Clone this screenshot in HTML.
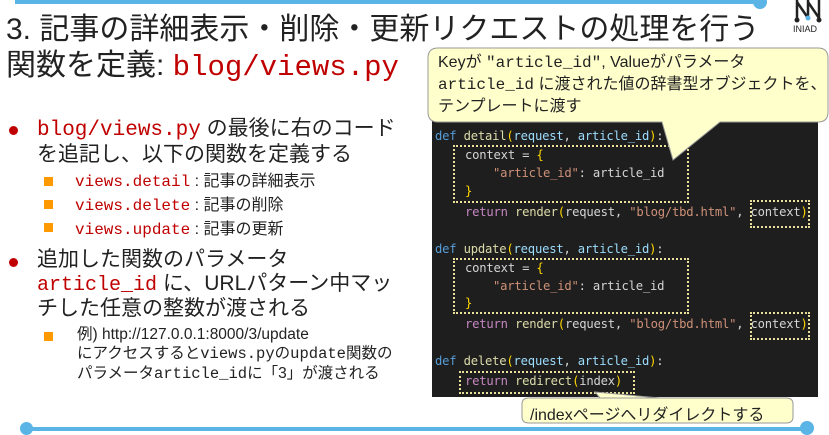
<!DOCTYPE html><html><head><meta charset="utf-8"><style>
body{margin:0;width:829px;height:435px;background:#fff;position:relative;overflow:hidden;font-family:"Liberation Sans","Noto Sans CJK JP",sans-serif;color:#222}
.a{position:absolute;white-space:nowrap}
.m{font-family:"Liberation Mono","DejaVu Sans Mono",monospace}
.r{color:#c00000}
.code{position:absolute;left:432px;top:121px;width:386px;height:276px;background:#1e1e1e}
.c{position:absolute;font-family:"DejaVu Sans Mono","Liberation Mono",monospace;font-size:12.2px;color:#d4d4d4;white-space:pre;letter-spacing:-0.2px}
.k{color:#569cd6}.f{color:#dcdcaa}.p{color:#9cdcfe}.s{color:#ce9178}.q{color:#c586c0}.b{color:#ffd700}
.d{position:absolute;border:2px dotted #e8e09a}
.sq{position:absolute;width:9px;height:9px;background:#f90}
.dot{position:absolute;width:9px;height:9px;border-radius:50%;background:#c00000}
</style></head><body>
<div class="a" style="left:15px;top:0;width:745px;height:4px;background:#5ab4e6"></div>
<div class="a" style="left:753px;top:-5px;width:14px;height:14px;border-radius:50%;background:#5ab4e6"></div>
<div class="a" style="left:25px;top:427px;width:785px;height:4px;background:#5ab4e6"></div>
<div class="a" style="left:20px;top:422px;width:13px;height:13px;border-radius:50%;background:#5ab4e6"></div>
<div class="a" style="left:800px;top:421px;width:14px;height:14px;border-radius:50%;background:#5ab4e6"></div>
<svg class="a" style="left:790px;top:0" width="39" height="34"><path d="M7 0V20M7 2L18 18M18 0V20M18 2L29 18M29 0V20" stroke="#222" stroke-width="2.5" fill="none"/><circle cx="7" cy="20" r="2.5" fill="#222"/><circle cx="18" cy="18" r="2.5" fill="#5ab4e6"/><circle cx="29" cy="20" r="2.5" fill="#222"/><text x="3" y="32" font-size="9" fill="#222" font-family="Liberation Sans">INIAD</text></svg>
<div class="a" style="left:6px;top:4px;font-size:30px;letter-spacing:0">3. 記事の詳細表示・削除・更新リクエストの処理を行う</div>
<div class="a" style="left:6px;top:40px;font-size:30px">関数を定義: <span class="m r" style="font-size:29px">blog/views.py</span></div>

<div class="dot" style="left:9px;top:126px"></div>
<div class="a" style="left:37px;top:117px;font-size:21px;line-height:24px"><span class="m r">blog/views.py</span> の最後に右のコード<br>を追記し、以下の関数を定義する</div>
<div class="sq" style="left:44px;top:177px"></div><div class="sq" style="left:44px;top:200px"></div><div class="sq" style="left:44px;top:223px"></div>
<div class="a" style="left:75px;top:170px;font-size:16px;line-height:23px"><span class="m r">views.detail</span> : 記事の詳細表示<br><span class="m r">views.delete</span> : 記事の削除<br><span class="m r">views.update</span> : 記事の更新</div>
<div class="dot" style="left:9px;top:258px"></div>
<div class="a" style="left:37px;top:248px;font-size:21px;line-height:23.5px">追加した関数のパラメータ<br><span class="m r" style="font-size:20px">article_id</span> に、URLパターン中マッ<br>チした任意の整数が渡される</div>
<div class="sq" style="left:44px;top:332px"></div>
<div class="a" style="left:77px;top:325px;font-size:15.5px;line-height:19px">例) http://127.0.0.1:8000/3/update<br>にアクセスすると<span class="m">views.py</span>の<span class="m">update</span>関数の<br>パラメータ<span class="m">article_id</span>に「3」が渡される</div>

<div class="code">
<div class="c" style="left:3px;top:8px"><span class="k">def</span> <span class="f">detail</span><span class="b">(</span><span class="p">request</span>, <span class="p">article_id</span><span class="b">)</span>:</div>
<div class="c" style="left:33px;top:27px">context = <span class="b">{</span></div>
<div class="c" style="left:61px;top:45px"><span class="s">"article_id"</span>: article_id</div>
<div class="c" style="left:33px;top:63px"><span class="b">}</span></div>
<div class="c" style="left:33px;top:84px"><span class="q">return</span> <span class="f">render</span><span class="b">(</span>request, <span class="s">"blog/tbd.html"</span>, context<span class="b">)</span></div>
<div class="c" style="left:3px;top:121px"><span class="k">def</span> <span class="f">update</span><span class="b">(</span><span class="p">request</span>, <span class="p">article_id</span><span class="b">)</span>:</div>
<div class="c" style="left:33px;top:140px">context = <span class="b">{</span></div>
<div class="c" style="left:61px;top:158px"><span class="s">"article_id"</span>: article_id</div>
<div class="c" style="left:33px;top:175px"><span class="b">}</span></div>
<div class="c" style="left:33px;top:196px"><span class="q">return</span> <span class="f">render</span><span class="b">(</span>request, <span class="s">"blog/tbd.html"</span>, context<span class="b">)</span></div>
<div class="c" style="left:3px;top:233px"><span class="k">def</span> <span class="f">delete</span><span class="b">(</span><span class="p">request</span>, <span class="p">article_id</span><span class="b">)</span>:</div>
<div class="c" style="left:33px;top:253px"><span class="q">return</span> <span class="f">redirect</span><span class="b">(</span>index<span class="b">)</span></div>
<div class="d" style="left:21px;top:24px;width:232px;height:54px"></div>
<div class="d" style="left:318px;top:79px;width:56px;height:24px"></div>
<div class="d" style="left:21px;top:137px;width:232px;height:52px"></div>
<div class="d" style="left:318px;top:191px;width:56px;height:24px"></div>
<div class="d" style="left:27px;top:250px;width:172px;height:19px"></div>
</div>

<svg class="a" style="left:0;top:0" width="829" height="435"><path d="M440 48H818Q828 48 828 58V112Q828 122 818 122H720L673 160L662 122H438Q428 122 428 112V58Q428 48 438 48Z" fill="#ffffcc" stroke="#999" stroke-width="1"/><path d="M660 398H529Q522 398 522 404V417Q522 423 529 423H786Q793 423 793 417V404Q793 398 786 398H600L595 392Z" fill="#ffffcc" stroke="#999" stroke-width="1"/></svg>
<div class="a" style="left:438px;top:52px;font-size:16px;line-height:21px">Keyが <span class="m">"article_id"</span>, Valueがパラメータ<br><span class="m">article_id</span> に渡された値の辞書型オブジェクトを、<br>テンプレートに渡す</div>
<div class="a" style="left:530px;top:401px;font-size:16px">/indexページへリダイレクトする</div>
</body></html>
